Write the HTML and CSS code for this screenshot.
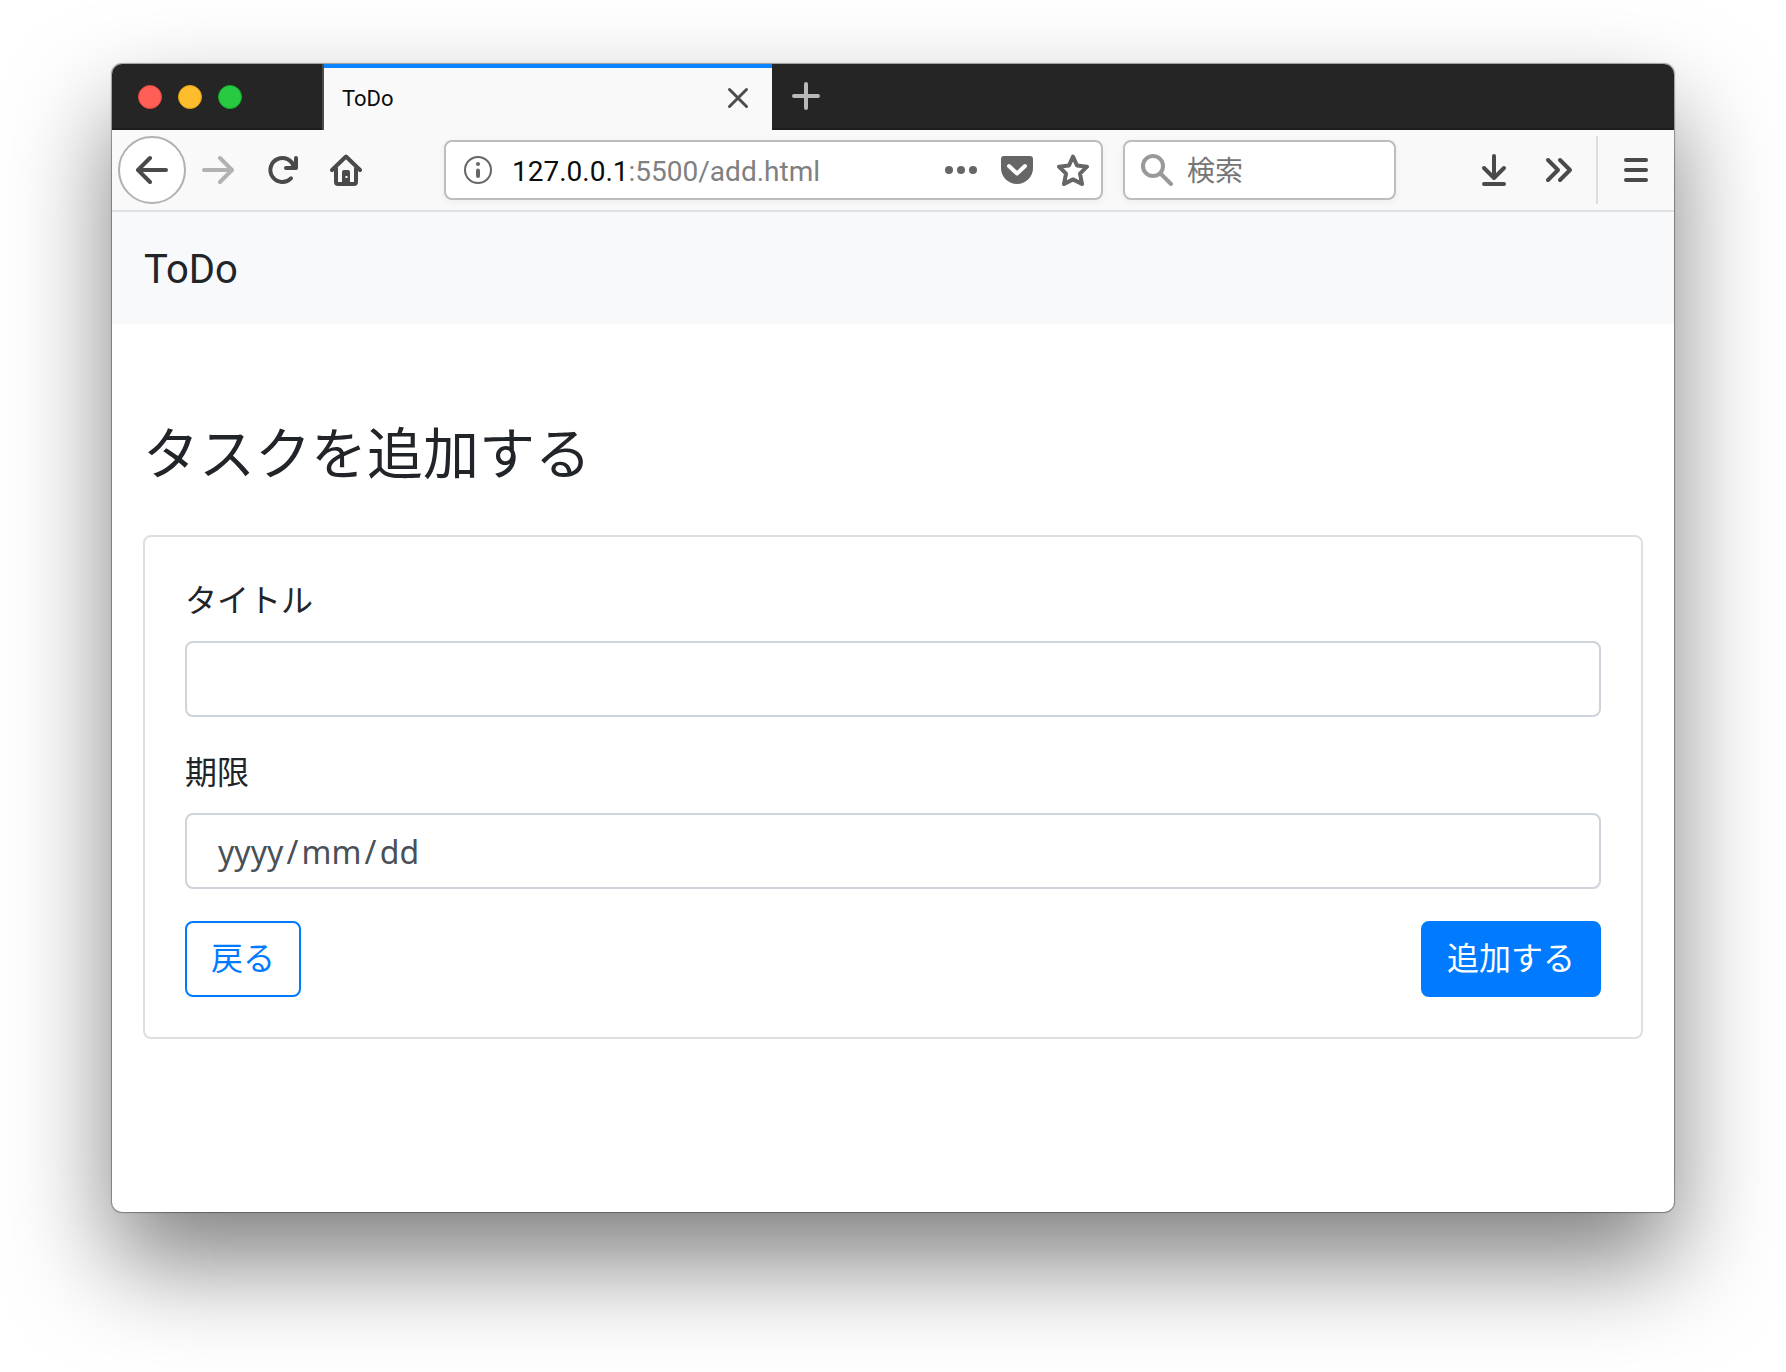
FILE: index.html
```html
<!DOCTYPE html>
<html lang="ja">
<head>
<meta charset="utf-8">
<meta name="viewport" content="width=device-width, initial-scale=1">
<title>ToDo</title>
<link rel="stylesheet" href="styles.css">
</head>
<body>
<div class="window">
  <div class="tabbar">
    <div class="lights">
      <span class="light light-close"></span>
      <span class="light light-min"></span>
      <span class="light light-max"></span>
    </div>
    <div class="tab">
      <span>ToDo</span>
      <button class="tab-button" type="button" aria-label="タブを閉じる">
        <svg class="icon" viewBox="0 0 32 32"><path class="thin" d="M7.500 6.500l17 17M24.500 6.500l-17 17"/></svg>
      </button>
    </div>
    <button class="new-tab" type="button" aria-label="新しいタブ">
      <svg class="icon" viewBox="0 0 32 32"><path d="M16 3v24M4 15h24"/></svg>
    </button>
  </div>

  <div class="toolbar">
    <button class="tool back" type="button" aria-label="戻る">
      <svg class="icon" viewBox="0 0 32 32"><path d="M14 4L2 16l12 12M3 16h27"/></svg>
    </button>
    <button class="tool forward" type="button" aria-label="進む">
      <svg class="icon" viewBox="0 0 32 32"><path d="M18 4l12 12-12 12M29 16H2"/></svg>
    </button>
    <button class="tool" type="button" aria-label="再読み込み">
      <svg class="icon" viewBox="0 0 32 32"><path d="M25 24.300A12 12 0 1 1 28 13"/><path d="M20 14h10V4"/><path class="solid" d="M23 14l7-8v8z"/></svg>
    </button>
    <button class="tool" type="button" aria-label="ホーム">
      <svg class="icon" viewBox="0 0 32 32"><path d="M2 16L16 2.500 30 16M6 14v14a2 2 0 0 0 2 2h16a2 2 0 0 0 2-2V14"/><path class="solid" fill-rule="evenodd" d="M14 16h4a2 2 0 0 1 2 2v13h-8V18a2 2 0 0 1 2-2zM15.500 22v2h2v-2z"/></svg>
    </button>

    <div class="fields">
      <div class="field url">
        <svg class="icon" viewBox="0 0 32 32"><circle class="line" cx="16" cy="16" r="13"/><circle class="solid" cx="16" cy="10" r="2"/><path d="M16 16.500v5.500"/></svg>
        <span class="address"><span class="host">127.0.0.1</span>:5500/add.html</span>
        <button class="field-button" type="button" aria-label="ページ操作">
          <svg class="icon" viewBox="0 0 32 32"><g class="solid"><circle cx="4" cy="16" r="4"/><circle cx="16" cy="16" r="4"/><circle cx="28" cy="16" r="4"/></g></svg>
        </button>
        <button class="field-button" type="button" aria-label="Pocket">
          <svg class="icon" viewBox="0 0 32 32"><path class="solid" d="M3 2h26a3 3 0 0 1 3 3v9a16 16 0 0 1-32 0V5a3 3 0 0 1 3-3z"/><path class="knockout" d="M8 12l8 7.500 8-7.500"/></svg>
        </button>
        <button class="field-button" type="button" aria-label="ブックマーク">
          <svg class="icon" viewBox="0 0 32 32"><path d="M16 2.500l4 9 10 1.200-7 6.900 2 10.400-9-4.600-9 4.600 2-10.400-7-6.900 10-1.200z"/></svg>
        </button>
      </div>
      <div class="field search">
        <svg class="icon" viewBox="0 0 32 32"><circle cx="12" cy="12" r="10"/><path d="M20 20l10 10"/></svg>
        <input class="search-input" type="text" placeholder="検索" aria-label="検索">
      </div>
    </div>

    <button class="tool" type="button" aria-label="ダウンロード">
      <svg class="icon" viewBox="0 0 32 32"><path d="M16 2v22M6 14l10 10 10-10M6 30h20"/></svg>
    </button>
    <button class="tool" type="button" aria-label="その他のツール">
      <svg class="icon" viewBox="0 0 32 32"><path d="M6 6l10 10L6 26M18 6l10 10-10 10"/></svg>
    </button>
    <span class="divider"></span>
    <button class="tool" type="button" aria-label="メニュー">
      <svg class="icon" viewBox="0 0 32 32"><path d="M6 6h20M6 16h20M6 26h20"/></svg>
    </button>
  </div>

  <nav class="navbar"><a class="brand" href="#">ToDo</a></nav>

  <main class="content">
    <h1 class="heading">タスクを追加する</h1>
    <form class="card">
      <div class="group">
        <label class="label" for="title">タイトル</label>
        <input class="control" id="title" type="text">
      </div>
      <div class="group">
        <label class="label" for="due">期限</label>
        <input class="control date" id="due" type="text" placeholder="yyyy&#8202;/&#8202;mm&#8202;/&#8202;dd">
      </div>
      <div class="actions">
        <a class="btn btn-outline" href="#">戻る</a>
        <button class="btn btn-primary" type="submit">追加する</button>
      </div>
    </form>
  </main>
</div>
</body>
</html>
```
FILE: styles.css
```css
* {
  box-sizing: border-box;
}

body {
  margin: 0;
  padding: 64px 112px 160px;
  background: #fff;
  color: #212529;
  font-family: Roboto, "Noto Sans CJK JP", sans-serif;
  font-size: 32px;
  line-height: 48px;
}

button,
input {
  font: inherit;
  color: inherit;
}

button {
  padding: 0;
  border: 0;
  background: none;
}

.window {
  border-radius: 10px;
  background: #fff;
  box-shadow: 0 0 1px 1px rgba(0, 0, 0, 0.35), 0 50px 100px rgba(0, 0, 0, 0.5);
}

/* Icons share a 32px grid and a 4px round stroke */
.icon {
  display: block;
  flex: none;
  width: 32px;
  height: 32px;
  fill: none;
  stroke: currentColor;
  stroke-width: 4;
  stroke-linecap: round;
  stroke-linejoin: round;
}

.icon .thin {
  stroke-width: 3;
}

.icon .line {
  stroke-width: 2;
}

.icon .solid {
  fill: currentColor;
  stroke: none;
}

.icon .knockout {
  stroke: #fff;
}

/* Tab bar */
.tabbar {
  display: flex;
  height: 66px;
  border-radius: 10px 10px 0 0;
  background: #252525;
  box-shadow: inset 0 -2px #1d1d1d;
}

.lights {
  display: flex;
  align-items: center;
  gap: 16px;
  width: 212px;
  padding-left: 26px;
  border-right: 2px solid #4c4c4c;
}

.light {
  width: 24px;
  height: 24px;
  border: 1px solid;
  border-radius: 50%;
}

.light-close {
  border-color: #e2463f;
  background: #ff5f57;
}

.light-min {
  border-color: #e1a116;
  background: #ffbd2e;
}

.light-max {
  border-color: #12ac28;
  background: #28ca42;
}

.tab {
  display: flex;
  align-items: center;
  justify-content: space-between;
  width: 448px;
  padding: 0 18px;
  border-top: 4px solid #0a84ff;
  background: #f9f9fa;
  color: #0c0c0d;
  font-size: 22px;
  line-height: 32px;
}

.tab-button {
  color: #4c4c4c;
}

.new-tab {
  display: flex;
  align-items: center;
  justify-content: center;
  width: 68px;
  color: #b9b9b9;
}

/* Navigation toolbar */
.toolbar {
  display: flex;
  align-items: center;
  height: 82px;
  padding: 0 6px;
  border-bottom: 2px solid #e0e1e3;
  background: #f9f9fa;
}

.tool {
  display: flex;
  flex: none;
  align-items: center;
  justify-content: center;
  width: 64px;
  height: 64px;
  color: #4a4a4a;
}

.back {
  width: 68px;
  height: 68px;
  border: 2px solid #b1b1b1;
  border-radius: 50%;
  background: #fff;
}

.forward {
  color: #b2b2b2;
}

.fields {
  display: flex;
  flex: 1;
  gap: 20px;
  min-width: 0;
  margin: 0 66px;
}

.field {
  display: flex;
  align-items: center;
  height: 60px;
  min-width: 0;
  padding: 0 12px 0 16px;
  border: 2px solid #bdbdbd;
  border-radius: 8px;
  background: #fff;
  box-shadow: 0 2px 8px rgba(0, 0, 0, 0.05);
  color: #666;
  font-size: 28px;
}

.url {
  flex: 1;
  gap: 24px;
}

.address {
  flex: 1;
  min-width: 0;
  overflow: hidden;
  margin-left: -6px;
  padding-top: 4px;
  color: #808080;
  white-space: nowrap;
}

.host {
  color: #0c0c0d;
}

.search {
  gap: 14px;
  width: 273px;
  color: #999;
}

.search-input {
  flex: 1;
  min-width: 0;
  padding: 4px 0 0;
  border: 0;
  outline: 0;
  background: none;
  color: #0c0c0d;
}

.search-input::placeholder {
  color: #757575;
}

.divider {
  width: 2px;
  height: 68px;
  margin: 0 6px;
  background: #dedede;
}

/* Page */
.navbar {
  display: flex;
  align-items: center;
  height: 112px;
  padding: 4px 32px 0;
  background: #f8f9fa;
}

.brand {
  color: #212529;
  font-size: 40px;
  line-height: 60px;
  text-decoration: none;
}

.content {
  padding: 98px 31px 173px;
}

.heading {
  margin: 0 0 46px;
  font-size: 56px;
  font-weight: 400;
  line-height: 67px;
}

.card {
  padding: 40px;
  border: 2px solid #dfdfdf;
  border-radius: 8px;
}

.group {
  margin-bottom: 32px;
}

.label {
  display: block;
  margin-bottom: 16px;
}

.control {
  display: block;
  width: 100%;
  height: 76px;
  padding: 12px 24px;
  border: 2px solid #ced4da;
  border-radius: 8px;
  background: #fff;
  color: #495057;
}

.date {
  padding-left: 31px;
  font-family: "Noto Sans", "Noto Sans CJK JP", sans-serif;
}

.date::placeholder {
  color: #495057;
}

.actions {
  display: flex;
  justify-content: space-between;
}

.btn {
  padding: 12px 24px;
  border: 2px solid #007bff;
  border-radius: 8px;
  text-decoration: none;
}

.btn-outline {
  color: #007bff;
}

.btn-primary {
  background: #007bff;
  color: #fff;
}
```
